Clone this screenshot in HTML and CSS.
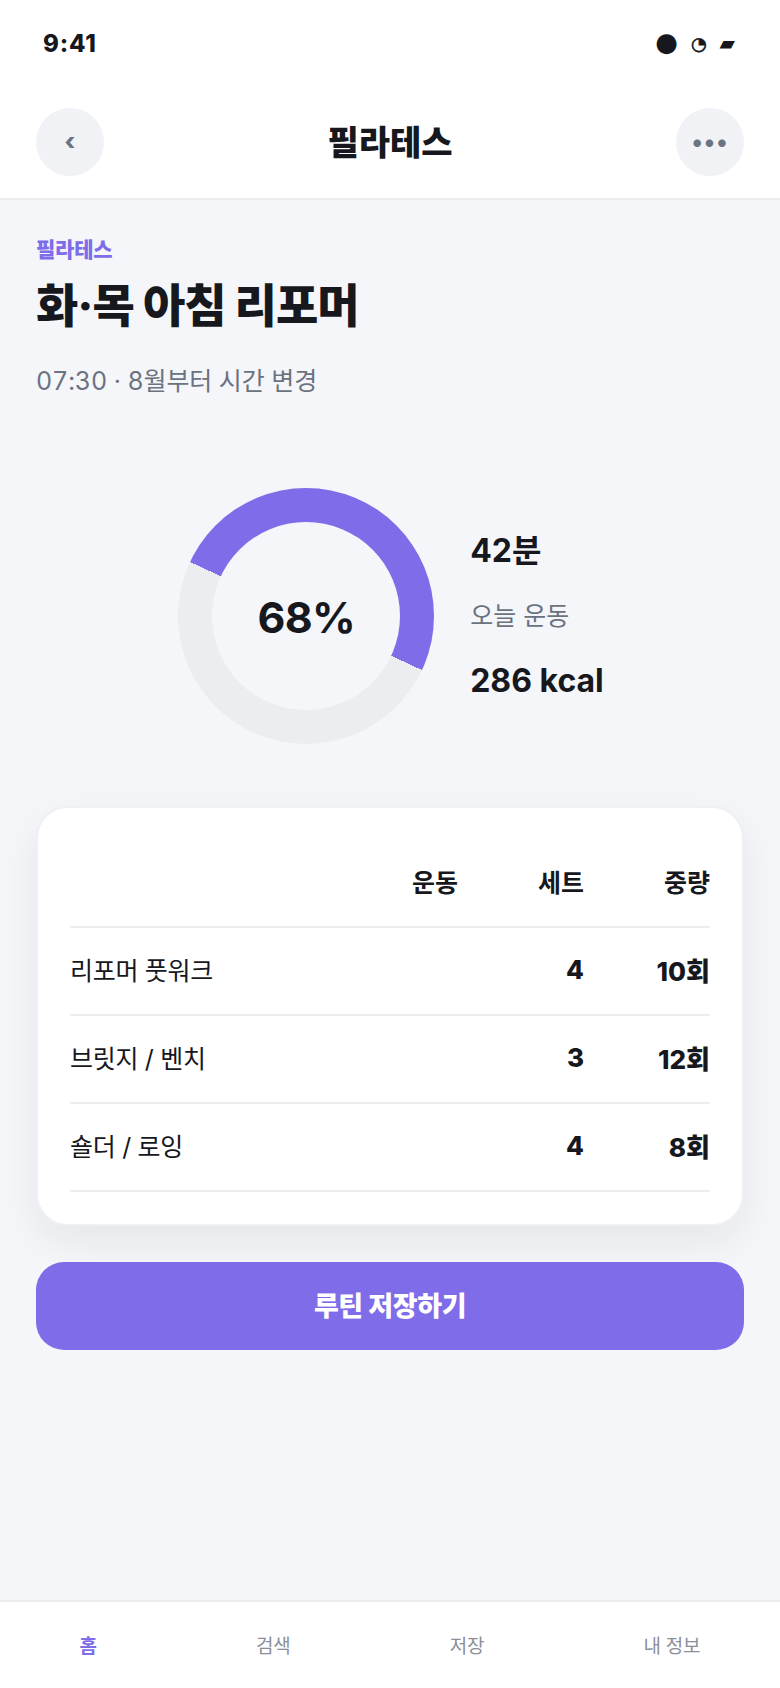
FILE: index.html
```html
<!DOCTYPE html>
<html lang="ko">
<head>
    <meta charset="UTF-8">
    <meta name="viewport" content="width=device-width, initial-scale=1.0">
    <title>필라테스</title>
    <link rel="stylesheet" href="styles.css">
</head>
<body>
    <div class="app">
        <div class="status-bar">
            <span class="status-time">9:41</span>
            <div class="status-icons">
                <span class="icon-dot">●</span>
                <span class="icon-clock">◔</span>
                <span class="icon-batt">▰</span>
            </div>
        </div>
        <div class="nav-bar">
            <button class="round-btn back-btn">‹</button>
            <h1 class="nav-title">필라테스</h1>
            <button class="round-btn more-btn">•••</button>
        </div>
        <div class="content">
            <div class="eyebrow">필라테스</div>
            <h2 class="page-title">화·목 아침 리포머</h2>
            <p class="subtitle">07:30 · 8월부터 시간 변경</p>

            <div class="summary">
                <div class="donut">
                    <div class="donut-hole">68%</div>
                </div>
                <div class="stats">
                    <div class="stat-value">42분</div>
                    <div class="stat-label">오늘 운동</div>
                    <div class="stat-value">286 kcal</div>
                </div>
            </div>

            <div class="card">
                <table class="routine">
                    <thead>
                        <tr>
                            <th>운동</th>
                            <th>세트</th>
                            <th>중량</th>
                        </tr>
                    </thead>
                    <tbody>
                        <tr>
                            <td>리포머 풋워크</td>
                            <td>4</td>
                            <td>10회</td>
                        </tr>
                        <tr>
                            <td>브릿지 / 벤치</td>
                            <td>3</td>
                            <td>12회</td>
                        </tr>
                        <tr>
                            <td>숄더 / 로잉</td>
                            <td>4</td>
                            <td>8회</td>
                        </tr>
                    </tbody>
                </table>
            </div>

            <button class="save-btn">루틴 저장하기</button>
        </div>
        <div class="tab-bar">
            <span class="tab active">홈</span>
            <span class="tab">검색</span>
            <span class="tab">저장</span>
            <span class="tab">내 정보</span>
        </div>
    </div>
</body>
</html>
```

FILE: styles.css
```css
* {
    box-sizing: border-box;
}
body {
    margin: 0;
    font-family: Inter, "Noto Sans CJK KR", sans-serif;
    color: #16181d;
    background-color: #fff;
}
h1, h2, p {
    margin: 0;
}
button {
    font-family: inherit;
    border: none;
    cursor: pointer;
}
.app {
    display: flex;
    flex-direction: column;
    height: 1688px;
}
.status-bar {
    height: 88px;
    padding: 0 45px 2px 43px;
    display: flex;
    justify-content: space-between;
    align-items: center;
}
.status-time {
    font-size: 24px;
    font-weight: 800;
    letter-spacing: 0.8px;
}
.status-icons {
    display: flex;
    align-items: center;
    gap: 13px;
    font-family: "DejaVu Sans", sans-serif;
}
.icon-dot {
    font-size: 26px;
    margin-bottom: 2px;
}
.icon-clock {
    font-size: 18px;
    -webkit-text-stroke: 0.6px #16181d;
}
.icon-batt {
    font-size: 20px;
}
.nav-bar {
    display: flex;
    justify-content: space-between;
    align-items: center;
    padding: 20px 36px 22px;
    border-bottom: 2px solid #ecedf1;
}
.round-btn {
    width: 68px;
    height: 68px;
    border-radius: 50%;
    background-color: #f1f2f6;
    color: #6b7280;
    font-size: 24px;
    font-weight: 800;
    padding: 0 0 2px;
}
.more-btn {
    font-size: 24px;
    font-weight: 700;
    letter-spacing: 1px;
}
.nav-title {
    font-size: 34px;
    font-weight: 800;
    padding-bottom: 4px;
}
.content {
    flex: 1;
    padding: 40px 36px 0;
    background-color: #f5f6fa;
}
.eyebrow {
    font-size: 21px;
    font-weight: 800;
    letter-spacing: -0.2px;
    color: #7f6ce8;
    line-height: 20px;
}
.page-title {
    margin-top: 18px;
    font-size: 46px;
    font-weight: 800;
    letter-spacing: -1px;
    line-height: 54px;
}
.subtitle {
    margin-top: 32px;
    font-size: 25px;
    font-variant-numeric: tabular-nums;
    letter-spacing: -0.1px;
    line-height: 34px;
    color: #6b7280;
}
.summary {
    display: flex;
    justify-content: center;
    align-items: center;
    gap: 36px;
    margin-top: 90px;
    padding-left: 2px;
}
.donut {
    width: 256px;
    height: 256px;
    border-radius: 50%;
    background: conic-gradient(from -65deg, #7f6ce8 0 180deg, #ecedf1 180deg 360deg);
    display: flex;
    justify-content: center;
    align-items: center;
}
.donut-hole {
    width: 188px;
    height: 188px;
    border-radius: 50%;
    background-color: #f5f6fa;
    display: flex;
    justify-content: center;
    align-items: center;
    font-size: 43px;
    font-weight: 700;
    letter-spacing: -0.7px;
    padding-top: 2px;
}
.stats {
    display: flex;
    flex-direction: column;
    gap: 28px;
}
.stat-value {
    font-size: 32px;
    font-weight: 700;
    line-height: 40px;
}
.stat-label {
    font-size: 25px;
    line-height: 34px;
    color: #6b7280;
}
.card {
    margin-top: 62px;
    padding: 32px;
    background-color: #fff;
    border: 2px solid #eef0f4;
    border-radius: 32px;
    box-shadow: 0 16px 40px rgba(22, 24, 29, 0.07);
}
.routine {
    width: 100%;
    border-collapse: separate;
    border-spacing: 0;
}
.routine th,
.routine td {
    height: 88px;
    padding: 0 0 4px;
    border-bottom: 2px solid #ecedf1;
    text-align: right;
    font-size: 26px;
    font-weight: 800;
    width: 126px;
}
.routine th {
    font-size: 25px;
    font-weight: 700;
}
.routine th:first-child {
    width: auto;
}
.routine td:first-child {
    width: auto;
    text-align: left;
    font-size: 25px;
    font-weight: 400;
    letter-spacing: -0.3px;
}
.save-btn {
    display: block;
    width: 100%;
    height: 88px;
    margin-top: 36px;
    padding: 0 0 4px;
    border-radius: 28px;
    background-color: #7f6ce8;
    color: #fff;
    font-size: 27px;
    font-weight: 800;
    letter-spacing: -0.4px;
}
.tab-bar {
    height: 88px;
    display: flex;
    justify-content: space-around;
    align-items: center;
    border-top: 2px solid #ecedf1;
    padding-bottom: 2px;
}
.tab {
    font-size: 19px;
    letter-spacing: -0.2px;
    color: #8b8f9a;
}
.tab.active {
    color: #7f6ce8;
    font-weight: 700;
}
```
